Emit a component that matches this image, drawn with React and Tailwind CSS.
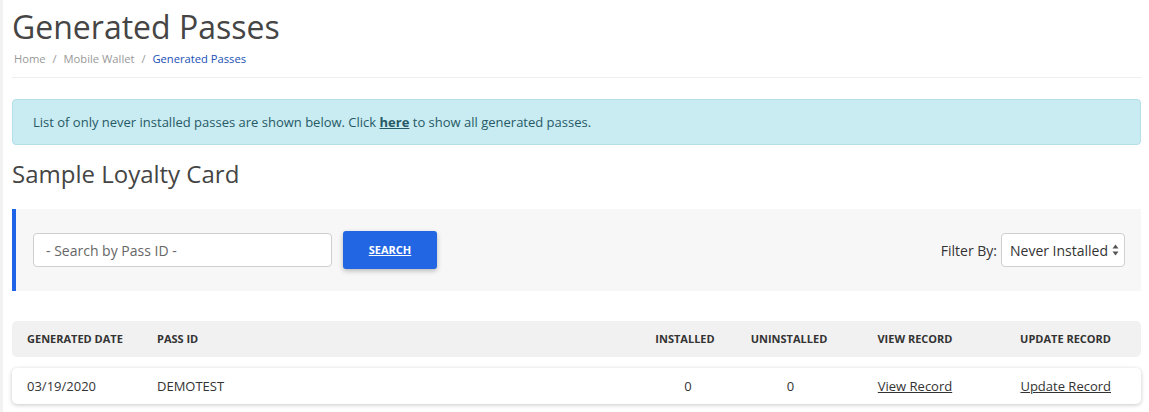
import React from 'react';

const COLS = 'grid grid-cols-[130px_485px_86px_122px_130px_1fr] items-center pl-[15px] pr-[30px]';

function FilterBar() {
  return (
    <div className="mt-[19px] flex h-[82px] items-center justify-between border-l-4 border-[#1f63e6] bg-[#f7f7f7] pl-[17px] pr-[16px]">
      <div className="flex items-center">
        <input
          type="text"
          placeholder="- Search by Pass ID -"
          className="h-[34px] w-[299px] rounded-[4px] border border-[#cfcfcf] bg-white px-[12px] text-[14px] text-[#555] placeholder-[#666] outline-none"
        />
        <button className="ml-[11px] h-[38px] w-[94px] rounded-[3px] bg-[#2266e3] text-[11px] font-bold text-white underline shadow-[0_2px_5px_rgba(0,0,0,0.25)]">
          SEARCH
        </button>
      </div>
      <div className="flex items-center">
        <span className="mr-[4px] text-[14px] text-[#333]">Filter By:</span>
        <div className="flex h-[34px] w-[124px] items-center justify-between rounded-[4px] border border-[#cfcfcf] bg-white pl-[8px] pr-[5px] text-[14px] text-[#333]">
          <span>Never Installed</span>
          <svg width="7" height="12" viewBox="0 0 7 12" className="text-[#555]">
            <path d="M3.5 0.5 L6.5 4.5 H0.5 Z" fill="currentColor" />
            <path d="M3.5 11.5 L6.5 7.5 H0.5 Z" fill="currentColor" />
          </svg>
        </div>
      </div>
    </div>
  );
}

function PassTable() {
  return (
    <div className="mt-[30px]">
      <div className={`${COLS} h-[36px] rounded-[5px] bg-[#f1f1f1] pt-[1px] text-[11px] font-bold uppercase text-[#333]`}>
        <div>Generated Date</div>
        <div>Pass ID</div>
        <div className="text-center">Installed</div>
        <div className="text-center">Uninstalled</div>
        <div className="text-center">View Record</div>
        <div className="text-right">Update Record</div>
      </div>
      <div className={`${COLS} mt-[11px] h-[36px] rounded-[5px] bg-white pt-[1px] text-[13px] text-[#333] shadow-[0_1px_4px_rgba(0,0,0,0.22)]`}>
        <div>03/19/2020</div>
        <div>DEMOTEST</div>
        <div className="pl-[6px] text-center">0</div>
        <div className="pl-[3px] text-center">0</div>
        <div className="text-center">
          <a href="#" className="underline">View Record</a>
        </div>
        <div className="text-right">
          <a href="#" className="underline">Update Record</a>
        </div>
      </div>
    </div>
  );
}

export default function App() {
  return (
    <div className="min-h-[412px] border-l-[3px] border-[#f2f2f2] bg-white font-['Open_Sans',sans-serif]">
      <div className="ml-[9px] mr-[8px]">
        <h1 className="pt-[5px] text-[32px] leading-[43px] text-[#454545]">Generated Passes</h1>
        <div className="mt-[3px] pl-[2px] text-[11.2px] leading-[16px] text-[#999]">
          Home <span className="mx-[4px]">/</span> Mobile Wallet <span className="mx-[4px]">/</span>{' '}
          <span className="text-[#2050b5]">Generated Passes</span>
        </div>
        <div className="mt-[10px] border-t border-[#eeeeee]" />
        <div className="mt-[21px] flex h-[46px] items-center rounded-[4px] border border-[#b3e0e9] bg-[#c9ebf2] pl-[20px] pt-[1px] text-[13px] text-[#265a66]">
          <span>
            List of only never installed passes are shown below. Click{' '}
            <a href="#" className="font-bold underline">here</a> to show all generated passes.
          </span>
        </div>
        <h2 className="mt-[13px] text-[24px] leading-[32px] text-[#454545]">Sample Loyalty Card</h2>
        <FilterBar />
        <PassTable />
      </div>
    </div>
  );
}
